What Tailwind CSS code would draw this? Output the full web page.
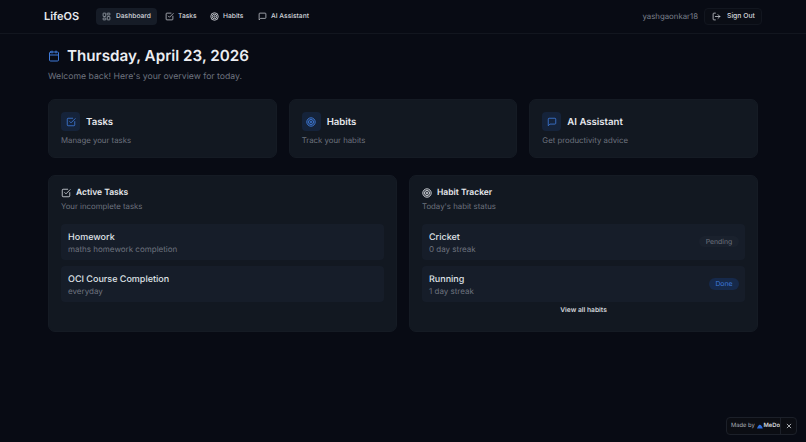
<!DOCTYPE html>
<html><head><meta charset="utf-8"><script src="https://cdn.jsdelivr.net/npm/@tailwindcss/browser@4"></script></head>
<body class="bg-[#080b14] font-['Inter',sans-serif] [text-rendering:geometricPrecision] text-[#e7e9ee] w-[806px] h-[442px] overflow-hidden relative">
<header class="h-[34px] border-b border-[#12161f] pl-[44px] pr-[44px] flex items-center justify-between">
  <div class="flex items-center">
    <span class="text-[11px] font-semibold w-[52px]">LifeOS</span>
    <nav class="flex items-center text-[6.7px] font-medium text-[#d5d8de]">
      <a class="flex items-center gap-[5px] h-[17px] w-[61px] pl-[6px] rounded-[4px] bg-[#161c27]"><svg class="w-[9px] h-[9px]" viewBox="0 0 24 24" fill="none" stroke="#aab0ba" stroke-width="2"><rect x="3" y="3" width="7" height="9" rx="1"/><rect x="14" y="3" width="7" height="5" rx="1"/><rect x="14" y="12" width="7" height="9" rx="1"/><rect x="3" y="16" width="7" height="5" rx="1"/></svg>Dashboard</a>
      <a class="flex items-center gap-[4px] ml-[8px] w-[45px]"><svg class="w-[9px] h-[9px]" viewBox="0 0 24 24" fill="none" stroke="#c8ccd3" stroke-width="2" stroke-linecap="round" stroke-linejoin="round"><path d="M21 11v8a2 2 0 0 1-2 2H5a2 2 0 0 1-2-2V5a2 2 0 0 1 2-2h11"/><path d="m9 11 3 3L22 4"/></svg>Tasks</a>
      <a class="flex items-center gap-[4px] w-[48px]"><svg class="w-[9px] h-[9px]" viewBox="0 0 24 24" fill="none" stroke="#c8ccd3" stroke-width="2.4"><circle cx="12" cy="12" r="10"/><circle cx="12" cy="12" r="6"/><circle cx="12" cy="12" r="2"/></svg>Habits</a>
      <a class="flex items-center gap-[4px]"><svg class="w-[9px] h-[9px]" viewBox="0 0 24 24" fill="none" stroke="#c8ccd3" stroke-width="2" stroke-linejoin="round"><path d="M21 15a2 2 0 0 1-2 2H7l-4 4V5a2 2 0 0 1 2-2h14a2 2 0 0 1 2 2z"/></svg>AI Assistant</a>
    </nav>
  </div>
  <div class="flex items-center gap-[6px]">
    <span class="text-[7.8px] text-[#7b808c]">yashgaonkar18</span>
    <button class="flex items-center h-[17px] w-[58px] pl-[7px] rounded-[4px] border border-[#12161f] bg-[#0a0d15] text-[6.8px] font-medium text-[#d5d8de]"><svg class="w-[9px] h-[9px] mr-[6px]" viewBox="0 0 24 24" fill="none" stroke="#d5d8de" stroke-width="2" stroke-linecap="round" stroke-linejoin="round"><path d="M9 21H5a2 2 0 0 1-2-2V5a2 2 0 0 1 2-2h4"/><path d="m16 17 5-5-5-5"/><path d="M21 12H9"/></svg>Sign Out</button>
  </div>
</header>
<main class="px-[48px]">
  <div class="flex items-center gap-[7px] mt-[10px] h-[24px]">
    <svg class="w-[12px] h-[12px]" viewBox="0 0 24 24" fill="none" stroke="#3f7ad8" stroke-width="2" stroke-linecap="round"><path d="M8 2v4"/><path d="M16 2v4"/><rect x="3" y="4" width="18" height="18" rx="2"/><path d="M3 10h18"/></svg>
    <h1 class="text-[15.2px] leading-none font-semibold text-[#eceef2]">Thursday, April 23, 2026</h1>
  </div>
  <p class="text-[8.7px] leading-[12px] mt-[3px] text-[#6d727e]">Welcome back! Here's your overview for today.</p>
  <section class="grid grid-cols-3 gap-[12px] mt-[16px]">
    <div class="h-[59px] rounded-[7px] bg-[#121821] border border-[#151b24] pl-[12px] pt-[12px]">
      <div class="flex items-center gap-[6px]"><span class="w-[19px] h-[19px] rounded-[4px] bg-[#15233a] flex items-center justify-center"><svg class="w-[10px] h-[10px]" viewBox="0 0 24 24" fill="none" stroke="#3f7ad8" stroke-width="2" stroke-linecap="round" stroke-linejoin="round"><path d="M21 11v8a2 2 0 0 1-2 2H5a2 2 0 0 1-2-2V5a2 2 0 0 1 2-2h11"/><path d="m9 11 3 3L22 4"/></svg></span><span class="text-[9.6px] font-semibold pt-[3px]">Tasks</span></div>
      <p class="text-[7.8px] leading-[10px] mt-[4px] text-[#6d727e]">Manage your tasks</p>
    </div>
    <div class="h-[59px] rounded-[7px] bg-[#121821] border border-[#151b24] pl-[12px] pt-[12px]">
      <div class="flex items-center gap-[6px]"><span class="w-[19px] h-[19px] rounded-[4px] bg-[#15233a] flex items-center justify-center"><svg class="w-[10px] h-[10px]" viewBox="0 0 24 24" fill="none" stroke="#3f7ad8" stroke-width="2.4"><circle cx="12" cy="12" r="10"/><circle cx="12" cy="12" r="6"/><circle cx="12" cy="12" r="2"/></svg></span><span class="text-[9.6px] font-semibold pt-[3px]">Habits</span></div>
      <p class="text-[7.8px] leading-[10px] mt-[4px] text-[#6d727e]">Track your habits</p>
    </div>
    <div class="h-[59px] rounded-[7px] bg-[#121821] border border-[#151b24] pl-[12px] pt-[12px]">
      <div class="flex items-center gap-[6px]"><span class="w-[19px] h-[19px] rounded-[4px] bg-[#15233a] flex items-center justify-center"><svg class="w-[10px] h-[10px]" viewBox="0 0 24 24" fill="none" stroke="#3f7ad8" stroke-width="2" stroke-linejoin="round"><path d="M21 15a2 2 0 0 1-2 2H7l-4 4V5a2 2 0 0 1 2-2h14a2 2 0 0 1 2 2z"/></svg></span><span class="text-[9.6px] font-semibold pt-[3px]">AI Assistant</span></div>
      <p class="text-[7.8px] leading-[10px] mt-[4px] text-[#6d727e]">Get productivity advice</p>
    </div>
  </section>
  <section class="grid grid-cols-2 gap-[12px] mt-[17px]">
    <div class="h-[157px] rounded-[7px] bg-[#121821] border border-[#151b24] px-[12px] pt-[11px]">
      <div class="flex items-center gap-[5px] h-[11px]"><svg class="w-[10px] h-[10px]" viewBox="0 0 24 24" fill="none" stroke="#d5d8de" stroke-width="2" stroke-linecap="round" stroke-linejoin="round"><path d="M21 11v8a2 2 0 0 1-2 2H5a2 2 0 0 1-2-2V5a2 2 0 0 1 2-2h11"/><path d="m9 11 3 3L22 4"/></svg><span class="text-[8.5px] font-semibold text-[#e7e9ee] pt-[2px]">Active Tasks</span></div>
      <p class="text-[7.8px] leading-[10px] mt-[3px] text-[#6d727e]">Your incomplete tasks</p>
      <div class="mt-[13px] flex flex-col gap-[6px]">
        <div class="h-[36px] rounded-[4px] bg-[#161d29] px-[7px] pt-[8px]"><p class="text-[9px] leading-[11px] font-medium text-[#dfe1e6]">Homework</p><p class="text-[8px] leading-[10px] mt-[1px] text-[#6d727e]">maths homework completion</p></div>
        <div class="h-[36px] rounded-[4px] bg-[#161d29] px-[7px] pt-[8px]"><p class="text-[9px] leading-[11px] font-medium text-[#dfe1e6]">OCI Course Completion</p><p class="text-[8px] leading-[10px] mt-[1px] text-[#6d727e]">everyday</p></div>
      </div>
    </div>
    <div class="h-[157px] rounded-[7px] bg-[#121821] border border-[#151b24] px-[12px] pt-[11px]">
      <div class="flex items-center gap-[5px] h-[11px]"><svg class="w-[10px] h-[10px]" viewBox="0 0 24 24" fill="none" stroke="#d5d8de" stroke-width="2.4"><circle cx="12" cy="12" r="10"/><circle cx="12" cy="12" r="6"/><circle cx="12" cy="12" r="2"/></svg><span class="text-[8.5px] font-semibold text-[#e7e9ee] pt-[2px]">Habit Tracker</span></div>
      <p class="text-[7.8px] leading-[10px] mt-[3px] text-[#6d727e]">Today's habit status</p>
      <div class="mt-[13px] flex flex-col gap-[6px]">
        <div class="h-[36px] rounded-[4px] bg-[#161d29] pl-[7px] pr-[6px] pt-[8px] flex items-start justify-between"><div><p class="text-[9px] leading-[11px] font-medium text-[#dfe1e6]">Cricket</p><p class="text-[8px] leading-[10px] mt-[1px] text-[#6d727e]">0 day streak</p></div><span class="h-[11px] w-[40px] mt-[4px] rounded-full bg-[#1a212d] text-[6.9px] leading-[11px] text-center text-[#6d727e]">Pending</span></div>
        <div class="h-[36px] rounded-[4px] bg-[#161d29] pl-[7px] pr-[6px] pt-[8px] flex items-start justify-between"><div><p class="text-[9px] leading-[11px] font-medium text-[#dfe1e6]">Running</p><p class="text-[8px] leading-[10px] mt-[1px] text-[#6d727e]">1 day streak</p></div><span class="h-[12px] w-[30px] mt-[4px] rounded-full bg-[#16294a] text-[6.9px] leading-[12px] text-center text-[#3d78d8]">Done</span></div>
      </div>
      <p class="text-center text-[6.7px] font-semibold leading-[9px] mt-[4px] text-[#d5d8de]">View all habits</p>
    </div>
  </section>
</main>
<div class="absolute left-[726px] top-[417px] w-[71px] h-[18px] rounded-[4px] border border-[#1c2029] bg-[#0b0d13] flex items-center text-[5.8px] text-[#aeb2ba]">
  <span class="pl-[4px] w-[53px] flex items-center gap-[2px] whitespace-nowrap">Made by <svg class="w-[7px] h-[5px]" viewBox="0 0 14 10"><path d="M0 10 Q4 0 7 1 Q11 1 14 10Z" fill="#2f6fe0"/></svg><b class="text-[#d5d8de] font-semibold -ml-[1px]">MeDo</b></span>
  <span class="border-l border-[#1c2029] h-full flex-1 flex items-center justify-center"><svg class="w-[6px] h-[6px]" viewBox="0 0 10 10" stroke="#d5d8de" stroke-width="1.3"><path d="M1.5 1.5l7 7M8.5 1.5l-7 7"/></svg></span>
</div>
</body></html>
